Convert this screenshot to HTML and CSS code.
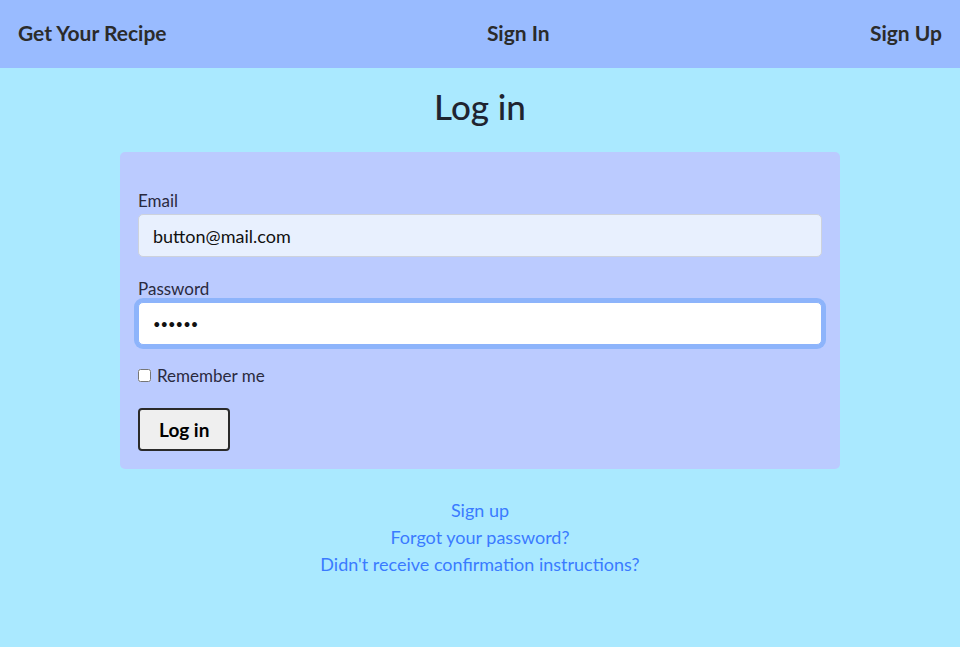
FILE: index.html
```html
<!DOCTYPE html>
<html lang="en">
<head>
<meta charset="utf-8">
<title>Log in</title>
<link rel="stylesheet" href="styles.css">
</head>
<body>
<nav class="navbar">
  <a class="brand" href="#">Get Your Recipe</a>
  <a class="nav-link" href="#">Sign In</a>
  <a class="nav-link" href="#">Sign Up</a>
</nav>
<main class="page">
  <h2 class="title">Log in</h2>
  <form class="card">
    <div class="field">
      <label class="label" for="email">Email</label>
      <input class="input input-filled" id="email" type="email" value="button@mail.com">
    </div>
    <div class="field field-last">
      <label class="label" for="password">Password</label>
      <input class="input input-focus" id="password" type="password" value="secret">
    </div>
    <div class="check">
      <input type="checkbox" id="remember" class="checkbox">
      <label for="remember">Remember me</label>
    </div>
    <div class="actions">
      <button class="btn" type="button">Log in</button>
    </div>
  </form>
  <div class="links">
    <a href="#">Sign up</a>
    <a href="#">Forgot your password?</a>
    <a href="#">Didn't receive confirmation instructions?</a>
  </div>
</main>
</body>
</html>
```
FILE: styles.css
```css
* { box-sizing: border-box; }
html, body { margin: 0; }
body {
  background: #aae9ff;
  font-family: Lato, "Noto Sans", sans-serif;
  font-size: 18px;
  line-height: 27px;
  color: #212529;
  height: 647px;
}
.navbar {
  height: 68px;
  background: #99bbff;
  display: flex;
  align-items: center;
  justify-content: space-between;
  padding: 0 18px 4px;
}
.navbar a {
  color: #2b2b2b;
  text-decoration: none;
  font-weight: 700;
  font-size: 21px;
}
.page {
  display: flex;
  flex-direction: column;
  align-items: center;
}
.title {
  margin: 17px 0 0;
  font-size: 35px;
  font-weight: 500;
  line-height: 42px;
  height: 67px;
  color: #1f2430;
}
.card {
  width: 720px;
  background: #bbcbff;
  border-radius: 5px;
  padding: 35px 18px 18px;
  display: flex;
  flex-direction: column;
}
.field { display: flex; flex-direction: column; margin-bottom: 18px; }
.field-last { margin-bottom: 17px; }
.label { font-size: 17px; line-height: 27px; color: #2a2a40; }
.input {
  height: 43px;
  border-radius: 5px;
  border: 1px solid #cdd2dc;
  padding: 0 14px;
  font: inherit;
  font-size: 18px;
  color: #111;
  outline: none;
}
.input-filled { background: #e8f0fe; }
.input-focus {
  background: #fff;
  border: 1px solid #8db4fb;
  box-shadow: 0 0 0 4px #8db4fb;
  font-size: 13px;
  letter-spacing: 0;
}
.check {
  display: flex;
  align-items: center;
  gap: 6px;
  font-size: 17px;
  line-height: 27px;
  color: #2a2a40;
  margin-bottom: 19px;
}
.checkbox { margin: 0; width: 13px; height: 13px; }
.actions { display: flex; }
.btn {
  font: inherit;
  font-weight: 700;
  font-size: 19px;
  padding: 0 19px;
  height: 43px;
  background: #efefef;
  border: 2px solid #2a2a2a;
  border-radius: 4px;
  color: #000;
}
.links {
  margin-top: 28px;
  display: flex;
  flex-direction: column;
  align-items: center;
}
.links a {
  color: #3a7bff;
  text-decoration: none;
  font-size: 18px;
  line-height: 27px;
}
```
